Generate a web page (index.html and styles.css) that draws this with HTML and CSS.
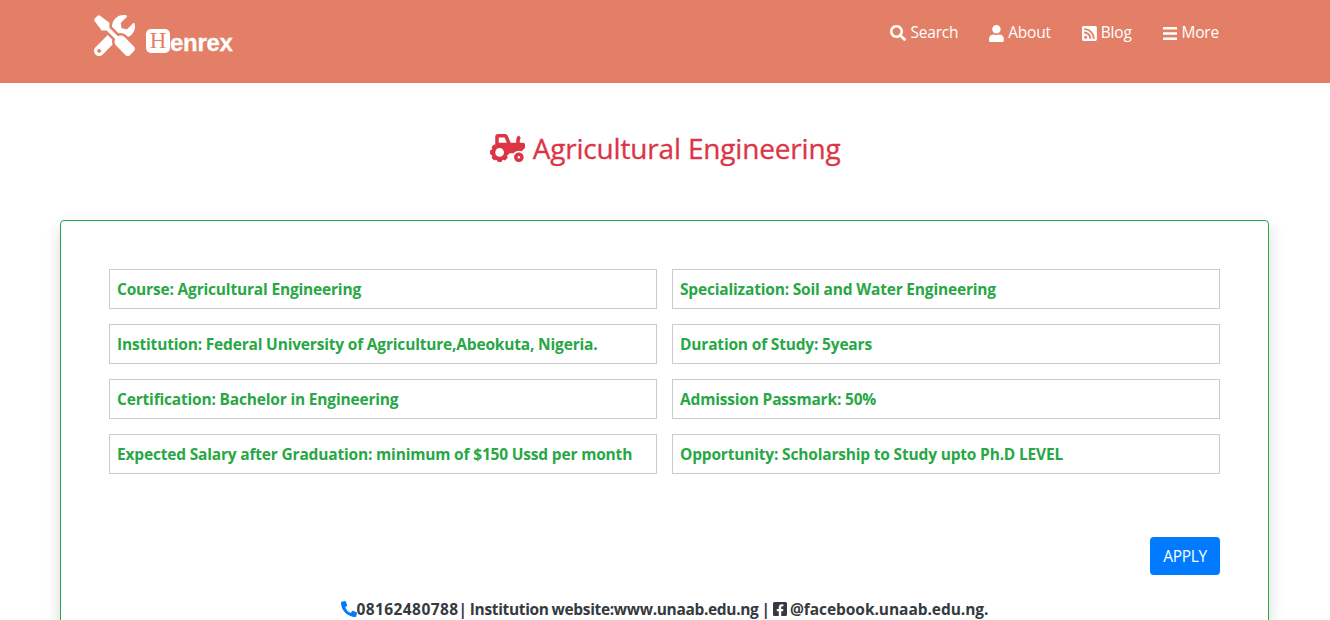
FILE: index.html
```html
<!DOCTYPE html>
<html lang="en">
<head>
<meta charset="utf-8">
<title>Agricultural Engineering</title>
<link rel="stylesheet" href="styles.css">
</head>
<body>
<header class="topbar">
  <a class="brand" href="#">
    <svg class="brand-icon" viewBox="0 0 512 512"><path d="M501.1 395.7L384 278.6c-23.1-23.1-57.6-27.6-85.4-13.9L192 158.1V96L80 12Q60 -6 42 12L12 42Q-6 60 12 80L96 192h62.1l106.6 106.6c-13.6 27.8-9.2 62.3 13.9 85.4l117.1 117.1c14.6 14.6 38.2 14.6 52.7 0l52.7-52.7c14.5-14.6 14.5-38.2 0-52.7zM331.7 225c28.3 0 54.9 11 74.9 31l19.4 19.4c15.8-6.9 30.8-16.5 43.8-29.5 37.1-37.1 49.7-89.3 37.9-136.7-2.2-9-13.5-12.1-20.1-5.5l-74.4 74.4-67.9-11.3L334 98.9l74.4-74.4c6.6-6.6 3.4-17.9-5.7-20.2-47.4-11.7-99.6.9-136.6 37.9-28.5 28.5-41.9 66.1-41.2 103.6l82.1 82.1c8.1-1.9 16.5-2.9 24.7-2.9zm-103.9 82l-56.7-56.7L18.7 402.8c-25 25-25 65.5 0 90.5s65.5 25 90.5 0l123.6-123.6c-7.6-19.9-9.9-41.6-5-62.7zM64 472c-13.2 0-24-10.8-24-24 0-13.3 10.7-24 24-24s24 10.7 24 24c0 13.2-10.7 24-24 24z"/></svg>
    <span class="brand-name"><span class="brand-h">H</span><span class="brand-rest">enrex</span></span>
  </a>
  <nav class="nav">
    <a href="#"><svg class="ico ico-search" viewBox="0 0 512 512"><path d="M505 442.7L405.3 343c-4.5-4.5-10.6-7-17-7H372c27.6-35.3 44-79.7 44-128C416 93.1 322.9 0 208 0S0 93.1 0 208s93.1 208 208 208c48.3 0 92.7-16.4 128-44v16.3c0 6.4 2.5 12.5 7 17l99.7 99.7c9.4 9.4 24.6 9.4 33.9 0l28.3-28.3c9.4-9.4 9.4-24.6.1-34zM208 336c-70.7 0-128-57.2-128-128 0-70.7 57.2-128 128-128 70.7 0 128 57.2 128 128 0 70.7-57.2 128-128 128z"/></svg> Search</a>
    <a href="#"><svg class="ico" viewBox="0 0 448 512"><path d="M224 256c70.7 0 128-57.3 128-128S294.7 0 224 0 96 57.3 96 128s57.3 128 128 128zm89.6 32h-16.7c-22.2 10.2-46.9 16-72.9 16s-50.6-5.8-72.9-16h-16.7C60.2 288 0 348.2 0 422.4V464c0 26.5 21.5 48 48 48h352c26.5 0 48-21.5 48-48v-41.6c0-74.2-60.2-134.4-134.4-134.4z"/></svg> About</a>
    <a href="#"><svg class="ico" viewBox="0 0 448 512"><path d="M400 32H48C21.49 32 0 53.49 0 80v352c0 26.51 21.49 48 48 48h352c26.51 0 48-21.49 48-48V80c0-26.51-21.49-48-48-48zM112 416c-26.51 0-48-21.49-48-48s21.49-48 48-48 48 21.49 48 48-21.49 48-48 48zm157.533 0h-34.335c-6.011 0-11.051-4.636-11.442-10.634-5.214-80.05-69.243-143.92-149.123-149.123-5.997-.39-10.633-5.431-10.633-11.441v-34.335c0-6.535 5.468-11.777 11.994-11.425 110.546 5.974 198.997 94.536 204.964 204.964.352 6.526-4.89 11.994-11.425 11.994zm103.027 0h-34.334c-6.161 0-11.175-4.882-11.427-11.038-5.598-136.535-115.204-246.161-251.76-251.76C68.882 152.949 64 147.935 64 141.774V107.44c0-6.454 5.338-11.664 11.787-11.432 167.83 6.025 302.21 141.191 308.205 308.205.232 6.449-4.978 11.787-11.432 11.787z"/></svg> Blog</a>
    <a href="#"><svg class="ico" viewBox="0 0 448 512"><path d="M16 132h416c8.837 0 16-7.163 16-16V76c0-8.837-7.163-16-16-16H16C7.163 60 0 67.163 0 76v40c0 8.837 7.163 16 16 16zm0 160h416c8.837 0 16-7.163 16-16v-40c0-8.837-7.163-16-16-16H16c-8.837 0-16 7.163-16 16v40c0 8.837 7.163 16 16 16zm0 160h416c8.837 0 16-7.163 16-16v-40c0-8.837-7.163-16-16-16H16c-8.837 0-16 7.163-16 16v40c0 8.837 7.163 16 16 16z"/></svg> More</a>
  </nav>
</header>

<h1 class="title"><svg class="title-icon" viewBox="0 0 640 512"><path d="M528 336c-48.6 0-88 39.4-88 88s39.4 88 88 88 88-39.4 88-88-39.4-88-88-88zm0 112c-13.23 0-24-10.77-24-24s10.77-24 24-24 24 10.77 24 24-10.77 24-24 24zm80-288h-64v-40.2c0-14.12 4.7-27.76 13.15-38.84 4.42-5.8 3.55-14.06-1.32-19.49L534.2 37.3c-6.66-7.45-18.32-6.92-24.7.78C490.58 60.9 480 89.81 480 119.8V160H377.67L321.58 29.14A47.914 47.914 0 0 0 277.45 0H144c-26.47 0-48 21.53-48 48v146.52c-8.63-6.73-20.96-6.46-28.89 1.47L36 227.1c-8.59 8.59-8.59 22.52 0 31.11l5.06 5.06c-4.99 9.26-8.96 18.82-11.91 28.72H22c-12.15 0-22 9.85-22 22v44c0 12.15 9.85 22 22 22h7.14c2.96 9.91 6.92 19.46 11.91 28.73l-5.06 5.06c-8.59 8.59-8.59 22.52 0 31.11L67.1 476c8.59 8.59 22.52 8.59 31.11 0l5.06-5.06c9.26 4.99 18.82 8.96 28.72 11.91V490c0 12.15 9.85 22 22 22h44c12.15 0 22-9.85 22-22v-7.14c9.9-2.95 19.46-6.92 28.72-11.91l5.06 5.06c8.59 8.59 22.52 8.59 31.11 0l31.11-31.11c8.59-8.59 8.59-22.52 0-31.11l-5.06-5.06c4.99-9.26 8.96-18.82 11.91-28.72H330c12.15 0 22-9.85 22-22v-6h80.54c21.91-28.99 56.32-48 95.46-48 18.64 0 36.07 4.61 51.8 12.2l50.82-50.82c6-6 9.37-14.14 9.37-22.63V192c.01-17.67-14.32-32-32-32zM176 416c-44.18 0-80-35.82-80-80s35.82-80 80-80 80 35.82 80 80-35.82 80-80 80zm22-256h-38V64h106.89l41.15 96H198z"/></svg> Agricultural Engineering</h1>

<main class="card">
  <div class="facts">
    <div class="fact">Course: Agricultural Engineering</div>
    <div class="fact">Specialization: Soil and Water Engineering</div>
    <div class="fact">Institution: Federal University of Agriculture,Abeokuta, Nigeria.</div>
    <div class="fact">Duration of Study: 5years</div>
    <div class="fact">Certification: Bachelor in Engineering</div>
    <div class="fact">Admission Passmark: 50%</div>
    <div class="fact">Expected Salary after Graduation: minimum of $150 Ussd per month</div>
    <div class="fact">Opportunity: Scholarship to Study upto Ph.D LEVEL</div>
  </div>
  <div class="actions"><button class="apply" type="button">APPLY</button></div>
  <p class="contact"><svg class="phone" viewBox="0 0 512 512"><path d="M497.39 361.8l-112-48a24 24 0 0 0-28 6.9l-49.6 60.6A370.66 370.66 0 0 1 130.6 204.11l60.6-49.6a23.94 23.94 0 0 0 6.9-28l-48-112A24.16 24.16 0 0 0 122.6.61l-104 24A24 24 0 0 0 0 48c0 256.5 207.9 464 464 464a24 24 0 0 0 23.4-18.6l24-104a24.29 24.29 0 0 0-14.01-27.6z"/></svg><span class="digits">08162480788</span>| <span class="site">Institution website:www.unaab.edu.ng</span> | <svg class="fb" viewBox="0 0 448 512"><path d="M400 32H48A48 48 0 0 0 0 80v352a48 48 0 0 0 48 48h137.25V327.69h-63V256h63v-54.64c0-62.15 37-96.48 93.67-96.48 27.14 0 55.52 4.84 55.52 4.84v61h-31.27c-30.81 0-40.42 19.12-40.42 38.73V256h68.78l-11 71.69h-57.78V480H400a48 48 0 0 0 48-48V80a48 48 0 0 0-48-48z"/></svg> <span class="handle">@facebook.unaab.edu.ng.</span></p>
</main>
</body>
</html>
```
FILE: styles.css
```css
* { box-sizing: border-box; }
html, body { margin: 0; padding: 0; }
body {
  font-family: "Open Sans", "Noto Sans", sans-serif;
  font-size: 16px;
  line-height: 1.5;
  color: #212529;
  background: #fff;
  overflow-x: hidden;
}
a { color: inherit; text-decoration: none; }

.topbar {
  height: 83px;
  background: #e47f67;
  color: #fff;
  display: flex;
  justify-content: space-between;
  padding: 15px 111px 0 94px;
}
.brand { display: flex; align-items: flex-start; }
.brand-icon { width: 41px; height: 41px; fill: #fff; display: block; }
.brand-name {
  margin: 14px 0 0 11px;
  font-family: "Liberation Sans", sans-serif;
  font-size: 24px;
  line-height: 24px;
  font-weight: 700;
  color: #fff;
  display: flex;
}
.brand-h {
  width: 24px;
  height: 24px;
  background: #fff;
  color: #e47f67;
  border-radius: 5px;
  font-family: "Liberation Serif", serif;
  font-weight: 400;
  font-size: 23px;
  line-height: 24px;
  text-align: center;
}
.brand-rest { margin-top: 2px; letter-spacing: -.3px; -webkit-text-stroke: .3px #fff; }
.nav { display: flex; gap: 31px; height: 36px; align-items: center; font-size: 15.5px; letter-spacing: -.2px; }
.nav a { display: flex; align-items: center; gap: 4px; }
.ico { height: 17px; width: auto; fill: #fff; display: block; }
.ico-search { height: 16px; }

.title {
  margin: 47px 0 0;
  font-size: 28px;
  line-height: 36px;
  font-weight: 500;
  text-align: center;
  color: #dc3545;
  letter-spacing: -.18px;
  -webkit-text-stroke: .3px #dc3545;
}
.title-icon { height: 28px; width: 35px; fill: #dc3545; vertical-align: -3px; margin-right: 1px; }

.card {
  margin: 54px 61px 0 60px;
  padding: 48px 48px 40px;
  border: 1px solid #28a745;
  border-radius: 4px;
  box-shadow: 0 8px 16px rgba(0, 0, 0, .15);
}
.facts { display: grid; grid-template-columns: 1fr 1fr; gap: 15px; }
.fact {
  height: 40px;
  padding: 2px 7px 0;
  border: 1px solid #ccc;
  display: flex;
  align-items: center;
  font-size: 15.5px;
  font-weight: 700;
  color: #28a745;
  letter-spacing: -.18px;
  white-space: nowrap;
}
.actions { display: flex; justify-content: flex-end; margin-top: 63px; }
.apply {
  width: 70px;
  height: 38px;
  border: 0;
  border-radius: 4px;
  background: #007bff;
  color: #fff;
  font: inherit;
  font-size: 15.5px;
  letter-spacing: -.3px;
  padding: 2px 0 0;
}
.contact {
  margin: 23px 0 0;
  text-align: center;
  font-weight: 700;
  font-size: 15.5px;
  color: #343a40;
  letter-spacing: -.2px;
  word-spacing: -.8px;
}
.digits { letter-spacing: .4px; }
.site { letter-spacing: -.34px; }
.handle { letter-spacing: -.05px; }
.phone { height: 16px; width: 16px; fill: #007bff; vertical-align: -2px; }
.fb { height: 16px; width: 14px; fill: #343a40; vertical-align: -2px; }
```
